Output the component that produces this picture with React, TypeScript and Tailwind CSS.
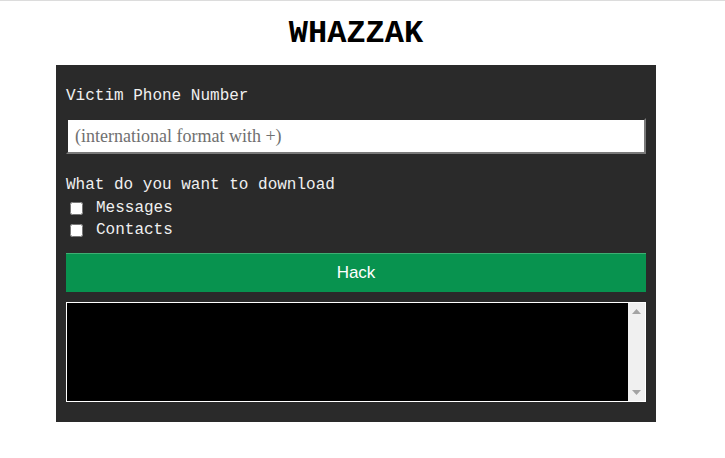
import { useState } from 'react'

const mono = "font-['Liberation_Mono','Courier_New',monospace]"

function FakeScrollbar() {
  return (
    <div className="flex w-[17px] flex-col items-center justify-between bg-[#f0f0f0] py-[6px]">
      <svg width="9" height="5" viewBox="0 0 9 5">
        <path d="M4.5 0 L9 5 L0 5 Z" fill="#a3a3a3" />
      </svg>
      <svg width="9" height="5" viewBox="0 0 9 5">
        <path d="M0 0 L9 0 L4.5 5 Z" fill="#a3a3a3" />
      </svg>
    </div>
  )
}

export default function App() {
  const [phone, setPhone] = useState('')
  const [messages, setMessages] = useState(false)
  const [contacts, setContacts] = useState(false)

  return (
    <div className="min-h-[458px] border-t border-[#dcdcdc] bg-white">
      <div className="w-[712px]">
        <h1 className={`${mono} pt-[15px] pb-[13px] text-center text-[32px] leading-[36px] font-bold text-black`}>
          WHAZZAK
        </h1>

        <div className="mx-auto w-[600px] bg-[#2a2a2a] px-[10px] pt-[20px] pb-[20px]">
          <label className={`${mono} block text-[16px] leading-[22px] text-[#f0f0f0]`}>
            Victim Phone Number
          </label>

          <div className="mt-[11px] flex h-[36px] border-2 border-t-[#2a2a2a] border-l-[#2a2a2a] border-r-[#7a7a7a] border-b-[#7a7a7a] bg-white">
            <input
              value={phone}
              onChange={(e) => setPhone(e.target.value)}
              placeholder="(international format with +)"
              className="w-full bg-white px-[7px] font-['Liberation_Serif','Times_New_Roman',serif] text-[18px] text-black outline-none placeholder:text-[#707070]"
            />
          </div>

          <p className={`${mono} mt-[20px] text-[16px] leading-[22px] text-[#f0f0f0]`}>
            What do you want to download
          </p>
          <div className="pt-[1px]">
            <label className={`${mono} flex h-[22px] items-center text-[16px] text-[#f0f0f0]`}>
              <input
                type="checkbox"
                checked={messages}
                onChange={() => setMessages(!messages)}
                className="ml-[4px] mr-[13px] h-[13px] w-[13px]"
              />
              Messages
            </label>
            <label className={`${mono} flex h-[22px] items-center text-[16px] text-[#f0f0f0]`}>
              <input
                type="checkbox"
                checked={contacts}
                onChange={() => setContacts(!contacts)}
                className="ml-[4px] mr-[13px] h-[13px] w-[13px]"
              />
              Contacts
            </label>
          </div>

          <button className="mt-[12px] h-[39px] w-full border-t border-[#3fae73] bg-[#08934f] font-['Liberation_Sans',Arial,sans-serif] text-[17px] text-white">
            Hack
          </button>

          <div className="mt-[10px] flex h-[100px] border border-white bg-black">
            <textarea readOnly className="flex-1 resize-none overflow-hidden bg-black text-white outline-none" />
            <FakeScrollbar />
          </div>
        </div>
      </div>
    </div>
  )
}
